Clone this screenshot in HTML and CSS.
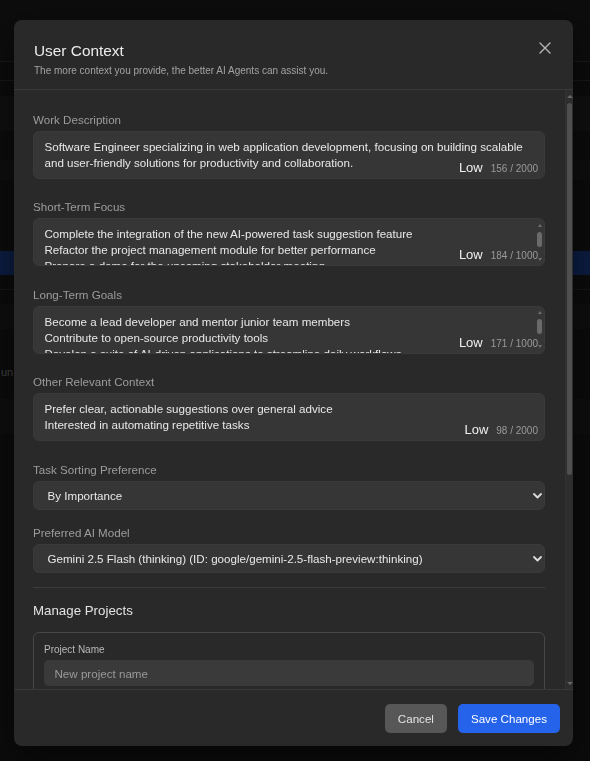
FILE: index.html
```html
<!DOCTYPE html>
<html lang="en">
<head>
<meta charset="utf-8">
<title>User Context</title>
<link rel="stylesheet" href="styles.css">
</head>
<body>
<div class="app" aria-hidden="true">
  <div class="app-header"></div>
  <div class="app-toolbar"></div>
  <div class="app-row h15"></div>
  <div class="app-row h35 band"></div>
  <div class="app-row h29"></div>
  <div class="app-row h20 band-faint"></div>
  <div class="app-row h71"></div>
  <div class="app-row h24 selected"></div>
  <div class="app-row h15 line"></div>
  <div class="app-row h14"></div>
  <div class="app-row h25 band-faint"></div>
  <div class="app-row h30"></div>
  <div class="app-row h25 text-row"><span class="app-text">un</span></div>
  <div class="app-row h15"></div>
  <div class="app-row h35 band-faint"></div>
</div>

<div class="overlay">
  <div class="modal" role="dialog" aria-labelledby="modal-title">
    <header class="modal-header">
      <div class="modal-heading">
        <h2 class="modal-title" id="modal-title">User Context</h2>
        <p class="modal-subtitle">The more context you provide, the better AI Agents can assist you.</p>
      </div>
      <button class="close-btn" type="button" aria-label="Close">
        <svg width="12" height="12" viewBox="0 0 12 12"><path d="M1 1 L11 11 M11 1 L1 11" stroke="#b4b4b4" stroke-width="1.4" stroke-linecap="round" fill="none"/></svg>
      </button>
    </header>

    <div class="modal-body">
      <div class="scroll-content">
        <div class="field field-text">
          <label class="field-label">Work Description</label>
          <div class="textarea-wrap">
            <textarea class="textarea">Software Engineer specializing in web application development, focusing on building scalable and user-friendly solutions for productivity and collaboration.</textarea>
            <div class="counter"><span class="counter-level">Low</span><span class="counter-count">156 / 2000</span></div>
          </div>
        </div>

        <div class="field field-text">
          <label class="field-label">Short-Term Focus</label>
          <div class="textarea-wrap">
            <textarea class="textarea">Complete the integration of the new AI-powered task suggestion feature
Refactor the project management module for better performance
Prepare a demo for the upcoming stakeholder meeting</textarea>
            <div class="mini-scrollbar"><span class="ms-up"></span><span class="ms-thumb"></span><span class="ms-down"></span></div>
            <div class="counter"><span class="counter-level">Low</span><span class="counter-count">184 / 1000</span></div>
          </div>
        </div>

        <div class="field field-text">
          <label class="field-label">Long-Term Goals</label>
          <div class="textarea-wrap">
            <textarea class="textarea">Become a lead developer and mentor junior team members
Contribute to open-source productivity tools
Develop a suite of AI-driven applications to streamline daily workflows</textarea>
            <div class="mini-scrollbar"><span class="ms-up"></span><span class="ms-thumb"></span><span class="ms-down"></span></div>
            <div class="counter"><span class="counter-level">Low</span><span class="counter-count">171 / 1000</span></div>
          </div>
        </div>

        <div class="field field-text">
          <label class="field-label">Other Relevant Context</label>
          <div class="textarea-wrap">
            <textarea class="textarea">Prefer clear, actionable suggestions over general advice
Interested in automating repetitive tasks</textarea>
            <div class="counter"><span class="counter-level">Low</span><span class="counter-count">98 / 2000</span></div>
          </div>
        </div>

        <div class="field field-select">
          <label class="field-label">Task Sorting Preference</label>
          <div class="select-wrap">
            <select class="select">
              <option>By Importance</option>
              <option>By Due Date</option>
            </select>
            <svg class="chevron" width="9" height="6" viewBox="0 0 9 6"><path d="M1 1 L4.5 4.5 L8 1" stroke="#dcdcdc" stroke-width="1.8" fill="none" stroke-linecap="round" stroke-linejoin="round"/></svg>
          </div>
        </div>

        <div class="field field-select">
          <label class="field-label">Preferred AI Model</label>
          <div class="select-wrap">
            <select class="select">
              <option>Gemini 2.5 Flash (thinking) (ID: google/gemini-2.5-flash-preview:thinking)</option>
            </select>
            <svg class="chevron" width="9" height="6" viewBox="0 0 9 6"><path d="M1 1 L4.5 4.5 L8 1" stroke="#dcdcdc" stroke-width="1.8" fill="none" stroke-linecap="round" stroke-linejoin="round"/></svg>
          </div>
        </div>

        <hr class="divider">

        <section class="projects">
          <h3 class="section-title">Manage Projects</h3>
          <div class="project-box">
            <label class="small-label">Project Name</label>
            <input class="input" type="text" placeholder="New project name">
          </div>
        </section>
      </div>

      <div class="scrollbar" aria-hidden="true">
        <span class="sb-up"></span>
        <div class="sb-track"><div class="sb-thumb"></div></div>
        <span class="sb-down"></span>
      </div>
    </div>

    <footer class="modal-footer">
      <button class="btn btn-secondary" type="button">Cancel</button>
      <button class="btn btn-primary" type="button">Save Changes</button>
    </footer>
  </div>
</div>
</body>
</html>
```

FILE: styles.css
```css
* { box-sizing: border-box; }

html, body {
  margin: 0;
  height: 100%;
}

body {
  font-family: "Liberation Sans", Arial, sans-serif;
  background: #1c1c1c;
  overflow: hidden;
}

/* ---------- background app (dimmed by overlay) ---------- */
.app {
  display: flex;
  flex-direction: column;
  height: 761px;
}
.app-header {
  height: 62px;
  flex: none;
  background: #1f1f1f;
  border-bottom: 1px solid #3e3e3e;
}
.app-toolbar {
  height: 19px;
  flex: none;
  border-bottom: 1px solid #3a3a3a;
}
.app-row { flex: none; }
.h14 { height: 14px; }
.h15 { height: 15px; }
.h20 { height: 20px; }
.h24 { height: 24px; }
.h25 { height: 25px; }
.h29 { height: 29px; }
.h30 { height: 30px; }
.h35 { height: 35px; }
.h71 { height: 71px; }
.band { background: #262626; }
.band-faint { background: #232323; }
.selected { background: #1e46a0; }
.line { border-bottom: 1px solid #353535; }
.text-row {
  display: flex;
  align-items: center;
}
.app-text {
  font-size: 11px;
  color: #9a9a9a;
  margin-left: 1px;
}

/* ---------- overlay + modal ---------- */
.overlay {
  position: fixed;
  inset: 0;
  background: rgba(0, 0, 0, 0.6);
  padding: 20px 0 0 14px;
}

.modal {
  width: 559px;
  height: 726px;
  background: #292929;
  border-radius: 8px;
  display: flex;
  flex-direction: column;
  overflow: hidden;
  box-shadow: 0 10px 30px rgba(0, 0, 0, 0.5);
}

.modal-header {
  flex: none;
  display: flex;
  justify-content: space-between;
  align-items: flex-start;
  padding: 21px 22px 12.5px 20px;
  border-bottom: 1px solid #393939;
}
.modal-title {
  margin: 0;
  font-size: 15.4px;
  line-height: 20px;
  font-weight: normal;
  color: #ececec;
}
.modal-subtitle {
  margin: 2.5px 0 0;
  font-size: 10px;
  line-height: 13px;
  color: #a3a3a3;
}
.close-btn {
  margin-top: 1px;
  width: 12px;
  height: 12px;
  padding: 0;
  border: none;
  background: none;
  display: flex;
}

.modal-body {
  flex: 1;
  min-height: 0;
  display: flex;
}
.scroll-content {
  flex: 1;
  min-width: 0;
  overflow: hidden;
  padding: 21.5px 20px 0 19px;
}

/* main (drawn) scrollbar */
.scrollbar {
  flex: none;
  width: 8px;
  background: #2e2e2e;
  border-left: 1px solid #333;
  display: flex;
  flex-direction: column;
  align-items: center;
  padding: 5px 0 4px;
}
.sb-up, .sb-down {
  flex: none;
  width: 0;
  height: 0;
  border-left: 3px solid transparent;
  border-right: 3px solid transparent;
}
.sb-up { border-bottom: 3px solid #686868; }
.sb-down { border-top: 3px solid #686868; }
.sb-track {
  flex: 1;
  width: 100%;
  display: flex;
  justify-content: center;
  padding-top: 5px;
}
.sb-thumb {
  width: 5px;
  height: 372px;
  border-radius: 3px;
  background: #4f4f4f;
}

/* ---------- fields ---------- */
.field-label {
  display: block;
  font-size: 11.6px;
  line-height: 15px;
  color: #9c9c9c;
  margin-bottom: 4px;
}
.field-text { margin-bottom: 20.5px; }
.field-select { margin-bottom: 15.5px; }
.field-select:last-of-type { margin-bottom: 0; }

.textarea-wrap,
.select-wrap {
  position: relative;
}

.textarea {
  display: block;
  width: 100%;
  height: 48px;
  margin: 0;
  padding: 7px 10.5px;
  border: 1px solid #3a3a3a;
  border-radius: 6px;
  background: #363636;
  color: #e8e8e8;
  font-family: "Liberation Sans", Arial, sans-serif;
  font-size: 11.6px;
  line-height: 16px;
  resize: none;
  overflow: hidden;
  outline: none;
}

.counter {
  position: absolute;
  right: 7px;
  bottom: 4px;
  display: flex;
  align-items: baseline;
  gap: 8px;
}
.counter-level {
  font-size: 13px;
  line-height: 15px;
  color: #eeeeee;
}
.counter-count {
  font-size: 10px;
  line-height: 12px;
  color: #9a9a9a;
}

.mini-scrollbar {
  position: absolute;
  top: 5px;
  right: 3px;
  width: 5px;
  height: 38px;
  display: flex;
  flex-direction: column;
  align-items: center;
}
.ms-up, .ms-down {
  flex: none;
  width: 0;
  height: 0;
  border-left: 2.5px solid transparent;
  border-right: 2.5px solid transparent;
}
.ms-up { border-bottom: 3px solid #6e6e6e; margin-top: 0.5px; }
.ms-down { border-top: 3px solid #6e6e6e; margin-top: auto; margin-bottom: 0.5px; }
.ms-thumb {
  flex: none;
  width: 5px;
  height: 15px;
  margin-top: 5px;
  border-radius: 3px;
  background: #6a6a6a;
}

.select {
  display: block;
  width: 100%;
  height: 29px;
  margin: 0;
  padding: 0 24px 0 13.5px;
  border: 1px solid #3a3a3a;
  border-radius: 6px;
  background: #363636;
  color: #e8e8e8;
  font-family: "Liberation Sans", Arial, sans-serif;
  font-size: 11.6px;
  appearance: none;
  -webkit-appearance: none;
  outline: none;
}
.chevron {
  position: absolute;
  right: 3px;
  top: 12px;
  pointer-events: none;
}

.divider {
  margin: 14px 0 0;
  border: none;
  border-top: 1px solid #3c3c3c;
}

.section-title {
  margin: 14px 0 0;
  font-size: 13.3px;
  line-height: 18px;
  font-weight: normal;
  color: #e2e2e2;
}

.project-box {
  margin-top: 12px;
  border: 1px solid #474747;
  border-radius: 6px;
  padding: 9.5px 10px 12px;
}
.small-label {
  display: block;
  font-size: 10px;
  line-height: 13px;
  color: #b8b8b8;
  margin-bottom: 4.5px;
}
.input {
  display: block;
  width: 100%;
  height: 26px;
  margin: 0;
  padding: 0 10.5px;
  border: none;
  border-radius: 5px;
  background: #3a3a3a;
  color: #e8e8e8;
  font-family: "Liberation Sans", Arial, sans-serif;
  font-size: 11.6px;
  outline: none;
}
.input::placeholder { color: #9a9a9a; }

/* ---------- footer ---------- */
.modal-footer {
  flex: none;
  display: flex;
  justify-content: flex-end;
  gap: 11px;
  padding: 14px 13px 13px;
  border-top: 1px solid #383838;
}

.btn {
  height: 29px;
  padding: 0 13px;
  border: none;
  border-radius: 5px;
  font-family: "Liberation Sans", Arial, sans-serif;
  font-size: 11.6px;
  cursor: pointer;
}
.btn-secondary {
  background: #575757;
  color: #e4e4e4;
}
.btn-primary {
  background: #2563eb;
  color: #ffffff;
}
```
